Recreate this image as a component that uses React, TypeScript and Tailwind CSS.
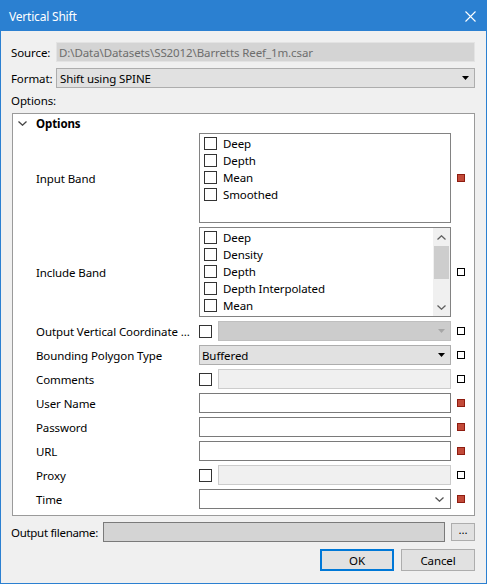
import React from "react";

function Check() {
  return <div className="w-[13px] h-[13px] shrink-0 border border-[#333333] bg-white" />;
}

function Indicator({ red }: { red?: boolean }) {
  return red ? (
    <div className="ml-[6px] w-[8px] h-[8px] shrink-0 border border-[#8e1c10] bg-[#c24a39]" />
  ) : (
    <div className="ml-[6px] w-[8px] h-[8px] shrink-0 border border-black bg-white" />
  );
}

function Triangle({ color = "#000000" }: { color?: string }) {
  return (
    <svg width="7" height="4" viewBox="0 0 7 4" className="shrink-0">
      <path d="M0 0 H7 L3.5 4 Z" fill={color} />
    </svg>
  );
}

function Chevron({ up, color = "#606060" }: { up?: boolean; color?: string }) {
  return (
    <svg width="9" height="5" viewBox="0 0 9 5" className="shrink-0">
      <path
        d={up ? "M0.5 4.5 L4.5 0.8 L8.5 4.5" : "M0.5 0.5 L4.5 4.2 L8.5 0.5"}
        fill="none"
        stroke={color}
        strokeWidth="1.3"
      />
    </svg>
  );
}

function ListItem({ label }: { label: string }) {
  return (
    <div className="h-[17px] flex items-center gap-[6px] whitespace-nowrap">
      <Check />
      <span className="pt-[1px]">{label}</span>
    </div>
  );
}

function Row({
  label,
  children,
  red,
  h = "h-[20px]",
}: {
  label: string;
  children: React.ReactNode;
  red?: boolean;
  h?: string;
}) {
  return (
    <div className={`flex items-center ${h}`}>
      <div className="w-[163px] shrink-0 whitespace-nowrap pt-[2px]">{label}</div>
      <div className="w-[252px] shrink-0 h-full flex items-center">{children}</div>
      <Indicator red={red} />
    </div>
  );
}

export default function App() {
  return (
    <div className="w-[487px] h-[584px] bg-[#f0f0f0] border border-[#2b80d1] flex flex-col font-['Noto_Sans',sans-serif] text-[11.5px] tracking-[-0.1px] text-black leading-[16px]">
      {/* Title bar */}
      <div className="h-[30px] shrink-0 bg-[#2b80d1] flex items-center justify-between pl-[8px] pr-[10px]">
        <span className="text-white text-[12px] tracking-[-0.2px] pt-[1px]">Vertical Shift</span>
        <svg width="11" height="11" viewBox="0 0 11 11">
          <path d="M0.5 0.5 L10.5 10.5 M10.5 0.5 L0.5 10.5" stroke="#ffffff" strokeWidth="1.1" />
        </svg>
      </div>

      {/* Body */}
      <div className="flex-1 flex flex-col px-[11px] pt-[11px]">
        {/* Source */}
        <div className="h-[20px] flex items-center">
          <div className="w-[44px] shrink-0 -ml-px pt-[1px]">Source:</div>
          <div className="flex-1 h-full ml-px bg-[#d4d4d4] border border-[#e3e3e3] flex items-center pl-[2px] pt-[1px] text-[#6d6d6d] whitespace-nowrap">
            D:\Data\Datasets\SS2012\Barretts Reef_1m.csar
          </div>
        </div>
        {/* Format */}
        <div className="h-[20px] mt-[6px] flex items-center">
          <div className="w-[44px] shrink-0 -ml-px pt-[1px]">Format:</div>
          <div className="flex-1 h-full ml-px bg-[#e1e1e1] border border-[#adadad] flex items-center justify-between pl-[3px] pr-[5px]">
            <span className="pt-[1px]">Shift using SPINE</span>
            <Triangle />
          </div>
        </div>
        {/* Options label */}
        <div className="h-[25px] flex items-center -ml-px">Options:</div>

        {/* Panel */}
        <div className="border border-[#9a9a9a] bg-white flex flex-col pb-[6px]">
          <div className="h-[19px] flex items-center pl-[5px]">
            <Chevron color="#444444" />
            <span className="ml-[9px] font-bold">Options</span>
          </div>
          <div className="flex flex-col gap-[4px] pl-[23px]">
            <Row label="Input Band" red h="h-[90px]">
              <div className="w-full h-full border border-[#828282] pl-[4px] pt-[1px] flex flex-col">
                <ListItem label="Deep" />
                <ListItem label="Depth" />
                <ListItem label="Mean" />
                <ListItem label="Smoothed" />
              </div>
            </Row>
            <Row label="Include Band" h="h-[90px]">
              <div className="w-full h-full border border-[#828282] flex overflow-hidden">
                <div className="flex-1 pl-[4px] pt-[1px] flex flex-col overflow-hidden">
                  <ListItem label="Deep" />
                  <ListItem label="Density" />
                  <ListItem label="Depth" />
                  <ListItem label="Depth Interpolated" />
                  <ListItem label="Mean" />
                </div>
                <div className="w-[17px] shrink-0 bg-[#f0f0f0] flex flex-col">
                  <div className="h-[18px] flex items-center justify-center">
                    <Chevron up />
                  </div>
                  <div className="h-[33px] mx-[1px] bg-[#cdcdcd]" />
                  <div className="flex-1" />
                  <div className="h-[17px] flex items-center justify-center">
                    <Chevron />
                  </div>
                </div>
              </div>
            </Row>
            <Row label="Output Vertical Coordinate ...">
              <Check />
              <div className="ml-[6px] flex-1 h-full bg-[#cccccc] border border-[#bfbfbf] flex items-center justify-end pr-[5px]">
                <Triangle color="#a6a6a6" />
              </div>
            </Row>
            <Row label="Bounding Polygon Type">
              <div className="w-full h-full bg-[#e1e1e1] border border-[#adadad] flex items-center justify-between pl-[2px] pr-[5px]">
                <span className="pt-[1px]">Buffered</span>
                <Triangle />
              </div>
            </Row>
            <Row label="Comments">
              <Check />
              <div className="ml-[6px] flex-1 h-full bg-[#f0f0f0] border border-[#cccccc]" />
            </Row>
            <Row label="User Name" red>
              <div className="w-full h-full bg-white border border-[#7a7a7a]" />
            </Row>
            <Row label="Password" red>
              <div className="w-full h-full bg-white border border-[#7a7a7a]" />
            </Row>
            <Row label="URL" red>
              <div className="w-full h-full bg-white border border-[#7a7a7a]" />
            </Row>
            <Row label="Proxy">
              <Check />
              <div className="ml-[6px] flex-1 h-full bg-[#f0f0f0] border border-[#cccccc]" />
            </Row>
            <Row label="Time" red>
              <div className="w-full h-full bg-white border border-[#7a7a7a] flex items-center justify-end pr-[6px]">
                <Chevron color="#555555" />
              </div>
            </Row>
          </div>
        </div>

        {/* Output filename */}
        <div className="h-[20px] mt-[6px] flex items-center">
          <div className="shrink-0 -ml-px mr-[5px] whitespace-nowrap pt-[1px] tracking-[-0.3px]">Output filename:</div>
          <div className="flex-1 h-full bg-[#d4d4d4] border border-[#7a7a7a]" />
          <div className="ml-[6px] w-[24px] h-[18px] bg-[#e1e1e1] border border-[#adadad] flex items-center justify-center pb-[4px]">
            ...
          </div>
        </div>

        {/* Buttons */}
        <div className="mt-[7px] flex justify-end gap-[7px]">
          <div className="w-[74px] h-[22px] bg-[#e1e1e1] border-2 border-[#0078d7] flex items-center justify-center pt-[1px]">
            OK
          </div>
          <div className="w-[74px] h-[22px] bg-[#e1e1e1] border border-[#adadad] flex items-center justify-center pt-[1px]">
            Cancel
          </div>
        </div>
      </div>
    </div>
  );
}
